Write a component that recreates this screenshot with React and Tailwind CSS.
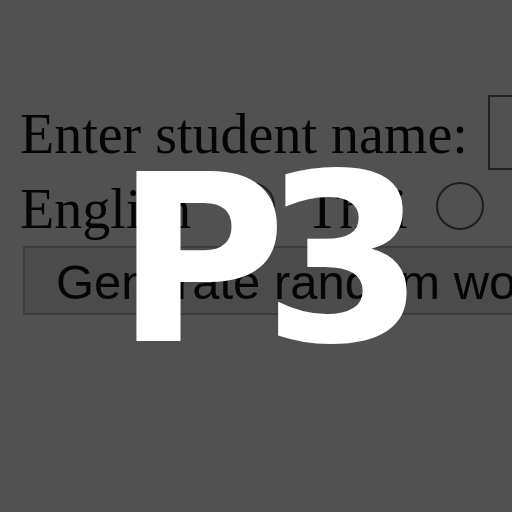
import React from 'react';

const serif = { fontFamily: '"Liberation Serif", "Times New Roman", serif' };

const Radio = ({ className }) => (
    <span className={`block shrink-0 w-[48px] h-[48px] rounded-full border-[2px] border-[#1e1e1e] ${className}`} />
);

const App = () => {
    return (
        <div className="relative w-[512px] h-[512px] overflow-hidden bg-[#515151] whitespace-nowrap">
            <div className="pl-[20px] pt-[95px] text-[#050505]">
                {/* name row */}
                <div className="flex items-start">
                    <span className="mt-[7px] text-[56px] leading-[64px]" style={serif}>Enter student name:</span>
                    <span className="block shrink-0 ml-[20px] w-[120px] h-[75px] border-[2px] border-[#222]" />
                </div>

                {/* language row */}
                <div className="flex items-start">
                    <span className="mt-[7px] text-[56px] leading-[64px]" style={serif}>English</span>
                    <Radio className="mt-[12px] ml-[36px]" />
                    <span className="mt-[7px] ml-[30px] text-[56px] leading-[64px]" style={serif}>Thai</span>
                    <Radio className="mt-[12px] ml-[28px]" />
                </div>

                <button
                    className="mt-[5px] ml-[3px] w-[560px] h-[69px] pl-[31px] pt-[4px] text-left bg-[#4b4b4b] border-[2px] border-[#3c3c3c] text-[49px] leading-none"
                    style={{ fontFamily: '"Liberation Sans", Arial, sans-serif' }}
                >
                    Generate random words
                </button>
            </div>

            {/* overlay label */}
            <div
                className="absolute left-[115px] top-[143px] text-white font-bold text-[234px] leading-none tracking-[-24px]"
                style={{ fontFamily: '"DejaVu Sans", sans-serif' }}
            >
                P3
            </div>
        </div>
    );
};

export default App;
